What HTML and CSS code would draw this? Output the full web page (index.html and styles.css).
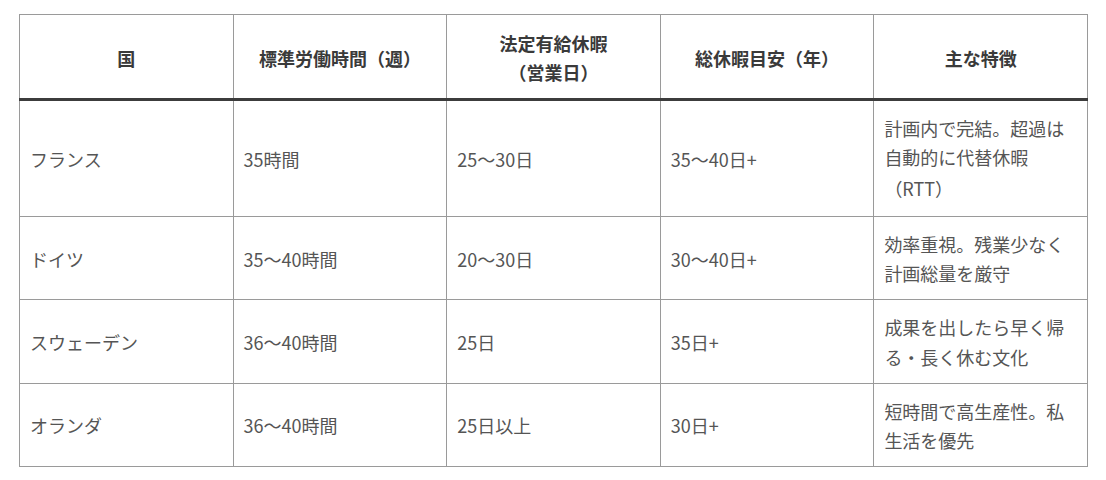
FILE: index.html
```html
<!DOCTYPE html>
<html lang="ja">
<head>
<meta charset="utf-8">
<title>各国の労働時間と休暇</title>
<link rel="stylesheet" href="styles.css">
</head>
<body>
<div class="wrap">
<table class="compare">
  <thead>
    <tr>
      <th>国</th>
      <th>標準労働時間（週）</th>
      <th>法定有給休暇<br>（営業日）</th>
      <th>総休暇目安（年）</th>
      <th>主な特徴</th>
    </tr>
  </thead>
  <tbody>
    <tr>
      <td>フランス</td>
      <td>35時間</td>
      <td>25～30日</td>
      <td>35～40日+</td>
      <td>計画内で完結。超過は自動的に代替休暇<span class="note">（RTT）</span></td>
    </tr>
    <tr>
      <td>ドイツ</td>
      <td>35～40時間</td>
      <td>20～30日</td>
      <td>30～40日+</td>
      <td>効率重視。残業少なく計画総量を厳守</td>
    </tr>
    <tr>
      <td>スウェーデン</td>
      <td>36～40時間</td>
      <td>25日</td>
      <td>35日+</td>
      <td>成果を出したら早く帰る・長く休む文化</td>
    </tr>
    <tr>
      <td>オランダ</td>
      <td>36～40時間</td>
      <td>25日以上</td>
      <td>30日+</td>
      <td>短時間で高生産性。私生活を優先</td>
    </tr>
  </tbody>
</table>
</div>
</body>
</html>
```
FILE: styles.css
```css
html, body {
  margin: 0;
  padding: 0;
  background: #ffffff;
}

body {
  font-family: "Noto Sans CJK JP", "Noto Sans", sans-serif;
  font-size: 18px;
  color: #555555;
}

.wrap {
  padding: 14px 18px 0 19px;
}

.compare {
  width: 100%;
  border-collapse: collapse;
  table-layout: fixed;
  border: 1px solid #9a9a9a;
}

.compare th,
.compare td {
  border: 1px solid #9a9a9a;
  padding: 13px 10px 11px;
  line-height: 29.2px;
  vertical-align: middle;
  text-align: left;
}

.compare th {
  font-weight: 700;
  color: #3a3a3a;
  text-align: center;
  line-height: 29px;
  padding-top: 14px;
  padding-bottom: 10.5px;
}

.compare thead th {
  border-bottom: 3px solid #3c3c3c;
}

.compare .note {
  display: block;
  line-height: 33px;
}
```
